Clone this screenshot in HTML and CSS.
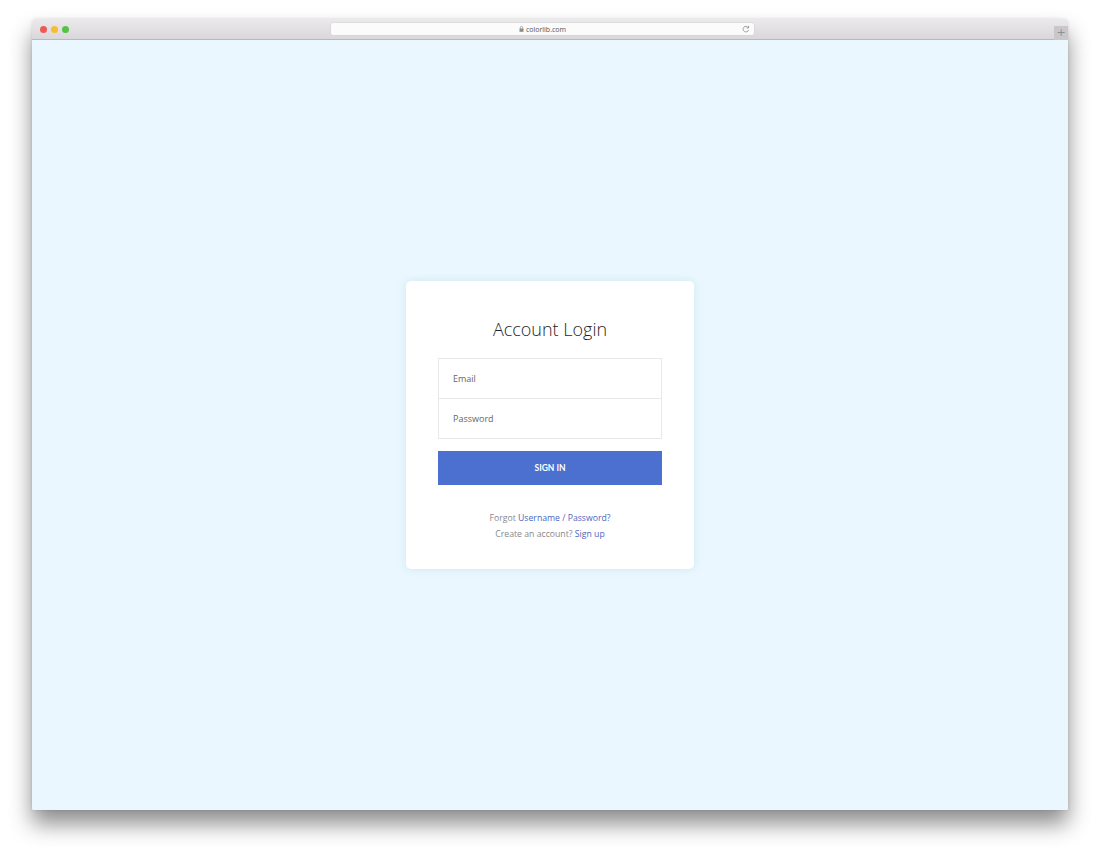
FILE: index.html
```html
<!DOCTYPE html>
<html>
<head>
<meta charset="utf-8">
<link rel="stylesheet" href="styles.css">
</head>
<body>
<div class="stage">
  <div class="window">
    <div class="titlebar">
      <div class="lights">
        <span class="dot red"></span>
        <span class="dot yellow"></span>
        <span class="dot green"></span>
      </div>
      <div class="urlbar">
        <span class="url">
          <svg class="lock" width="5" height="6" viewBox="0 0 5 6"><rect x="0.5" y="2.5" width="4" height="3.3" fill="#8a8a8a"/><path d="M1.3 2.6V1.7a1.2 1.2 0 0 1 2.4 0v0.9" fill="none" stroke="#8a8a8a" stroke-width="0.7"/></svg>
          colorlib.com
        </span>
        <svg class="reload" width="8" height="8" viewBox="0 0 8 8"><path d="M6.3 2.6A2.8 2.8 0 1 0 6.6 5" fill="none" stroke="#8a8a8a" stroke-width="0.8"/><path d="M6.6 0.8v2.2H4.4" fill="none" stroke="#8a8a8a" stroke-width="0.8"/></svg>
      </div>
      <div class="newtab">+</div>
    </div>
    <div class="content">
      <div class="card">
        <h1 class="title">Account Login</h1>
        <div class="fields">
          <div class="field">Email</div>
          <div class="field">Password</div>
        </div>
        <div class="btn">SIGN IN</div>
        <div class="links">
          <p>Forgot <a>Username / Password?</a></p>
          <p>Create an account? <a>Sign up</a></p>
        </div>
      </div>
    </div>
  </div>
</div>
</body>
</html>
```
FILE: styles.css
```css
html, body {
  margin: 0;
  padding: 0;
  background: #ffffff;
}
body {
  width: 1100px;
  height: 856px;
  overflow: hidden;
  font-family: "Open Sans", "Liberation Sans", sans-serif;
}
.stage {
  padding: 19px 32px 0 32px;
}
.window {
  width: 1036px;
  height: 791px;
  display: flex;
  flex-direction: column;
  border-radius: 4px 4px 2px 2px;
  box-shadow: 0 14px 22px rgba(0, 0, 0, 0.45), 0 0 3px rgba(0, 0, 0, 0.12);
  overflow: hidden;
}
.titlebar {
  height: 20px;
  flex: none;
  display: flex;
  align-items: center;
  background: linear-gradient(#ebe9eb, #d9d7d9);
  border-bottom: 1px solid #b9b9b9;
  position: relative;
}
.lights {
  display: flex;
  gap: 4px;
  margin-left: 8px;
  width: 291px;
}
.dot {
  width: 7px;
  height: 7px;
  border-radius: 50%;
}
.red { background: #ee5a52; }
.yellow { background: #f5bd30; }
.green { background: #56c242; }
.urlbar {
  width: 423px;
  height: 12px;
  background: #fbfbfb;
  border-radius: 2px;
  box-shadow: 0 0 0 0.5px #d4d4d4;
  display: flex;
  align-items: center;
  justify-content: center;
  position: relative;
}
.url {
  font-size: 7px;
  color: #555;
  display: flex;
  align-items: center;
  gap: 2px;
}
.reload {
  position: absolute;
  right: 4px;
  top: 2px;
}
.newtab {
  position: absolute;
  right: 0;
  bottom: -1px;
  width: 14px;
  height: 14px;
  background: #c9c7c9;
  color: #8f8f8f;
  font-size: 11px;
  line-height: 14px;
  text-align: center;
  font-family: "DejaVu Sans", sans-serif;
}
.content {
  flex: 1;
  background: #eaf7fe;
  display: flex;
  align-items: center;
  justify-content: center;
}
.card {
  width: 288px;
  height: 288px;
  box-sizing: border-box;
  background: #fff;
  border-radius: 5px;
  padding: 36px 32px 0 32px;
  box-shadow: 0 0 8px rgba(170, 200, 220, 0.35);
}
.title {
  margin: 0 0 17px 0;
  text-align: center;
  font-weight: 300;
  font-size: 18px;
  line-height: 24px;
  color: #1f1f1f;
}
.fields {
  border: 1px solid #e8e8e8;
}
.field {
  height: 39px;
  display: flex;
  align-items: center;
  padding-left: 14px;
  font-size: 9px;
  color: #666;
}
.field + .field {
  border-top: 1px solid #e8e8e8;
}
.btn {
  margin-top: 12px;
  height: 34px;
  background: #4b70cf;
  color: #fff;
  font-family: Lato, "Open Sans", sans-serif;
  font-weight: 700;
  font-size: 8.5px;
  display: flex;
  align-items: center;
  justify-content: center;
}
.links {
  margin-top: 25px;
  text-align: center;
  font-size: 8.7px;
  line-height: 16px;
  color: #888;
}
.links p {
  margin: 0;
}
.links a {
  color: #4b66c0;
}
```
